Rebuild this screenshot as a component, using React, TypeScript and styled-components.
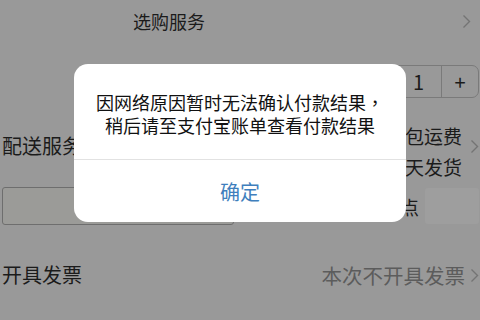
import styled, { createGlobalStyle } from "styled-components";

const GlobalStyle = createGlobalStyle`
  html, body {
    margin: 0;
    padding: 0;
  }
  body {
    width: 480px;
    height: 320px;
    overflow: hidden;
    background: #999999;
    font-family: "Noto Sans CJK SC", "Noto Sans", sans-serif;
  }
`;

const Page = styled.div`
  position: relative;
  width: 480px;
  height: 320px;
  background: #999999;
  color: #1b1b1b;
`;

const Row = styled.div<{ $h: number; $align?: string }>`
  height: ${(p) => p.$h}px;
  display: flex;
  align-items: ${(p) => p.$align || "center"};
  justify-content: space-between;
  box-sizing: border-box;
  padding: 0 1px 0 2px;
`;

const Label = styled.span<{ $size?: number; $muted?: boolean }>`
  font-size: ${(p) => p.$size || 20}px;
  line-height: 1;
  color: ${(p) => (p.$muted ? "#5c5c5c" : "#1b1b1b")};
  white-space: nowrap;
`;

const Right = styled.div`
  display: flex;
  align-items: center;
  gap: 8px;
`;

const Lines = styled.div`
  display: flex;
  flex-direction: column;
  align-items: flex-end;
  font-size: 19px;
  line-height: 31px;
  white-space: nowrap;
  margin-top: 10px;
`;

const Stepper = styled.div`
  display: flex;
  height: 33px;
  margin-top: 23px;
  margin-left: auto;
  border: 1px solid #7a7a7a;
  border-radius: 7px;
  box-sizing: border-box;
  overflow: hidden;
`;

const StepCell = styled.div<{ $w: number; $line?: boolean }>`
  width: ${(p) => p.$w}px;
  display: flex;
  align-items: center;
  justify-content: center;
  font-size: 20px;
  color: #1b1b1b;
  border-left: ${(p) => (p.$line ? "1px solid #7a7a7a" : "none")};
`;

const InputBox = styled.div`
  width: 232px;
  height: 38px;
  border: 1px solid #6e6e6e;
  border-radius: 3px;
  box-sizing: border-box;
  background: #9b9b98;
`;

const SelectBox = styled.div`
  width: 54px;
  height: 36px;
  background: #9e9e9e;
  border-radius: 3px;
`;

const Overlay = styled.div`
  position: absolute;
  left: 74px;
  top: 64px;
  width: 332px;
  height: 158px;
  background: #ffffff;
  border-radius: 14px;
  display: flex;
  flex-direction: column;
`;

const Message = styled.div`
  height: 96px;
  box-sizing: border-box;
  padding-top: 27px;
  text-align: center;
  font-size: 18px;
  line-height: 23px;
  color: #111111;
  border-bottom: 1px solid #e2e2e2;
`;

const Comma = styled.span`
  font-family: "Noto Sans CJK TC", sans-serif;
`;

const Confirm = styled.div`
  flex: 1;
  display: flex;
  align-items: center;
  justify-content: center;
  font-size: 20px;
  color: #3f7fbd;
`;

function Chevron() {
  return (
    <svg width="9" height="15" viewBox="0 0 9 15" fill="none">
      <polyline points="1.5,1.5 7.5,7.5 1.5,13.5" stroke="#747474" strokeWidth="1.4" />
    </svg>
  );
}

export default function App() {
  return (
    <Page>
      <GlobalStyle />
      <Row $h={42} style={{ paddingLeft: 133, paddingRight: 9 }}>
        <Label $size={18}>选购服务</Label>
        <Chevron />
      </Row>
      <Row $h={63} $align="flex-start">
        <Stepper>
          <StepCell $w={45} />
          <StepCell $w={45} $line>1</StepCell>
          <StepCell $w={36} $line>+</StepCell>
        </Stepper>
      </Row>
      <Row $h={82}>
        <Label>配送服务</Label>
        <Right>
          <Lines>
            <span>包运费</span>
            <span>天发货</span>
          </Lines>
          <Chevron />
        </Right>
      </Row>
      <Row $h={38}>
        <InputBox />
        <Right style={{ gap: 6 }}>
          <Label $size={19}>点</Label>
          <SelectBox />
        </Right>
      </Row>
      <Row $h={95} style={{ paddingTop: 5 }}>
        <Label>开具发票</Label>
        <Right style={{ gap: 5 }}>
          <Label $size={20.5} $muted>本次不开具发票</Label>
          <Chevron />
        </Right>
      </Row>
      <Overlay>
        <Message>
          因网络原因暂时无法确认付款结果<Comma>，</Comma>
          <br />
          稍后请至支付宝账单查看付款结果
        </Message>
        <Confirm>确定</Confirm>
      </Overlay>
    </Page>
  );
}
